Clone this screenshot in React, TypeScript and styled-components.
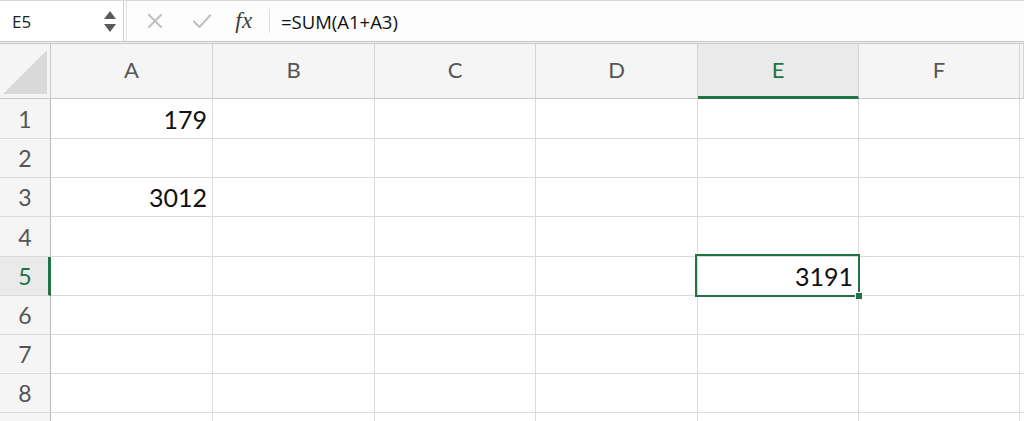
import React from "react";
import styled, { createGlobalStyle, css } from "styled-components";

const GREEN = "#217346";

const GlobalStyle = createGlobalStyle`
  html, body { margin: 0; padding: 0; background: #ffffff; }
  body { font-family: "Open Sans", "Liberation Sans", sans-serif; overflow: hidden; }
  * { box-sizing: border-box; }
`;

const Page = styled.div`
  width: 1024px;
  height: 421px;
  display: flex;
  flex-direction: column;
  background: #ffffff;
  overflow: hidden;
`;

const FormulaBar = styled.div`
  height: 42px;
  display: flex;
  border-top: 1px solid #d9d9d9;
  border-bottom: 1px solid #c4c4c4;
  background: #fdfdfd;
  flex-shrink: 0;
`;

const NameBox = styled.div`
  width: 124px;
  display: flex;
  align-items: center;
  justify-content: space-between;
  padding: 0 6px 0 12px;
  background: #ffffff;
  border-right: 1px solid #cfcfcf;
  margin-right: 2px;
`;

const NameText = styled.span`
  font-family: "Open Sans", sans-serif;
  font-size: 17px;
  color: #222;
`;

const FormulaArea = styled.div`
  flex: 1;
  display: flex;
  align-items: center;
  background: #fdfdfd;
  border-left: 1px solid #e2e2e2;
`;

const IconSlot = styled.span`
  width: 47px;
  display: flex;
  align-items: center;
  justify-content: center;
`;

const Fx = styled.span`
  font-family: "Liberation Serif", serif;
  font-style: italic;
  font-size: 23px;
  color: #3c3c3c;
  width: 34px;
  text-align: center;
  margin-left: 2px;
  letter-spacing: 0.5px;
`;

const Divider = styled.span`
  width: 1px;
  height: 24px;
  background: #dedede;
  margin: 0 11px 0 8px;
`;

const FormulaText = styled.span`
  font-family: "Open Sans", sans-serif;
  font-size: 18.5px;
  color: #111;
`;

const Gap = styled.div`
  height: 1px;
  background: #f3f3f3;
  flex-shrink: 0;
`;

const Sheet = styled.div`
  display: grid;
  grid-template-columns: 51px 162px 162px 161px 162px 161px 161px 4px;
  grid-template-rows: 55px 40px 39px 39px 40px 39px 39px 39px 39px 20px;
  border-top: 1px solid #c4c4c4;
`;

const Corner = styled.div`
  background: #f5f5f5;
  border-right: 1px solid #c9c9c9;
  border-bottom: 1px solid #c9c9c9;
  display: flex;
  align-items: flex-end;
  padding: 0 3px 4px 3px;
`;

const ColHeader = styled.div<{ $active?: boolean }>`
  background: ${(p) => (p.$active ? "#eaeaea" : "#f5f5f5")};
  border-right: 1px solid #d4d4d4;
  border-bottom: 1px solid #c9c9c9;
  display: flex;
  align-items: center;
  justify-content: center;
  font-family: Lato, "Open Sans", sans-serif;
  font-size: 22px;
  color: ${(p) => (p.$active ? GREEN : "#555")};
  padding-bottom: 4px;
  ${(p) =>
    p.$active &&
    css`
      border-bottom: 3px solid ${GREEN};
      padding-bottom: 2px;
    `}
`;

const RowHeader = styled.div<{ $active?: boolean }>`
  background: ${(p) => (p.$active ? "#eaeaea" : "#f5f5f5")};
  border-right: ${(p) => (p.$active ? `3px solid ${GREEN}` : "1px solid #b9b9b9")};
  border-bottom: 1px solid #dadada;
  display: flex;
  align-items: center;
  justify-content: center;
  font-family: Lato, "Open Sans", sans-serif;
  font-size: 23px;
  color: ${(p) => (p.$active ? GREEN : "#555")};
  padding-left: ${(p) => (p.$active ? "2px" : "0")};
`;

const Cell = styled.div`
  position: relative;
  border-right: 1px solid #dadada;
  border-bottom: 1px solid #dadada;
  display: flex;
  align-items: center;
  justify-content: flex-end;
  padding-right: 5px;
  font-family: Lato, "Open Sans", sans-serif;
  font-size: 25px;
  color: #111;
  background: #fff;
`;

const Selection = styled.div`
  position: absolute;
  z-index: 5;
  left: -3px;
  top: -3px;
  right: -2px;
  bottom: -2px;
  border: 2px solid ${GREEN};
  pointer-events: none;
`;

const FillHandle = styled.div`
  position: absolute;
  right: -5px;
  bottom: -5px;
  width: 8px;
  height: 8px;
  background: ${GREEN};
  border: 1px solid #fff;
`;

const CellText = styled.span`
  position: relative;
  z-index: 1;
`;

const columns = ["A", "B", "C", "D", "E", "F"];
const data: Record<string, string> = { A1: "179", A3: "3012", E5: "3191" };

export default function App() {
  const rows = [1, 2, 3, 4, 5, 6, 7, 8, 9];
  return (
    <Page>
      <GlobalStyle />
      <FormulaBar>
        <NameBox>
          <NameText>E5</NameText>
          <svg width="14" height="26" viewBox="0 0 14 26">
            <polygon points="7,3 13,11 1,11" fill="#5a5a5a" />
            <polygon points="1,16 13,16 7,24" fill="#5a5a5a" />
          </svg>
        </NameBox>
        <FormulaArea>
          <IconSlot style={{ marginLeft: 4 }}>
            <svg width="16" height="16" viewBox="0 0 16 16">
              <path d="M2 2 L14 14 M14 2 L2 14" stroke="#c2c2c2" strokeWidth="2.2" strokeLinecap="round" />
            </svg>
          </IconSlot>
          <IconSlot>
            <svg width="20" height="16" viewBox="0 0 20 16">
              <path d="M2 8.5 L7.5 14 L18 2.5" stroke="#c2c2c2" strokeWidth="2.2" fill="none" strokeLinecap="round" strokeLinejoin="round" />
            </svg>
          </IconSlot>
          <Fx>fx</Fx>
          <Divider />
          <FormulaText>=SUM(A1+A3)</FormulaText>
        </FormulaArea>
      </FormulaBar>
      <Gap />
      <Sheet>
        <Corner>
          <svg width="44" height="44" viewBox="0 0 44 44">
            <polygon points="0,44 44,44 44,0" fill="#d9d9d9" />
          </svg>
        </Corner>
        {columns.map((c) => (
          <ColHeader key={c} $active={c === "E"}>
            {c}
          </ColHeader>
        ))}
        <ColHeader />
        {rows.map((r) => (
          <React.Fragment key={r}>
            <RowHeader $active={r === 5}>{r < 9 ? r : null}</RowHeader>
            {columns.map((c) => {
              const id = `${c}${r}`;
              const sel = id === "E5";
              return (
                <Cell key={id}>
                  {data[id] && <CellText>{data[id]}</CellText>}
                  {sel && (
                    <Selection>
                      <FillHandle />
                    </Selection>
                  )}
                </Cell>
              );
            })}
            <Cell />
          </React.Fragment>
        ))}
      </Sheet>
    </Page>
  );
}
